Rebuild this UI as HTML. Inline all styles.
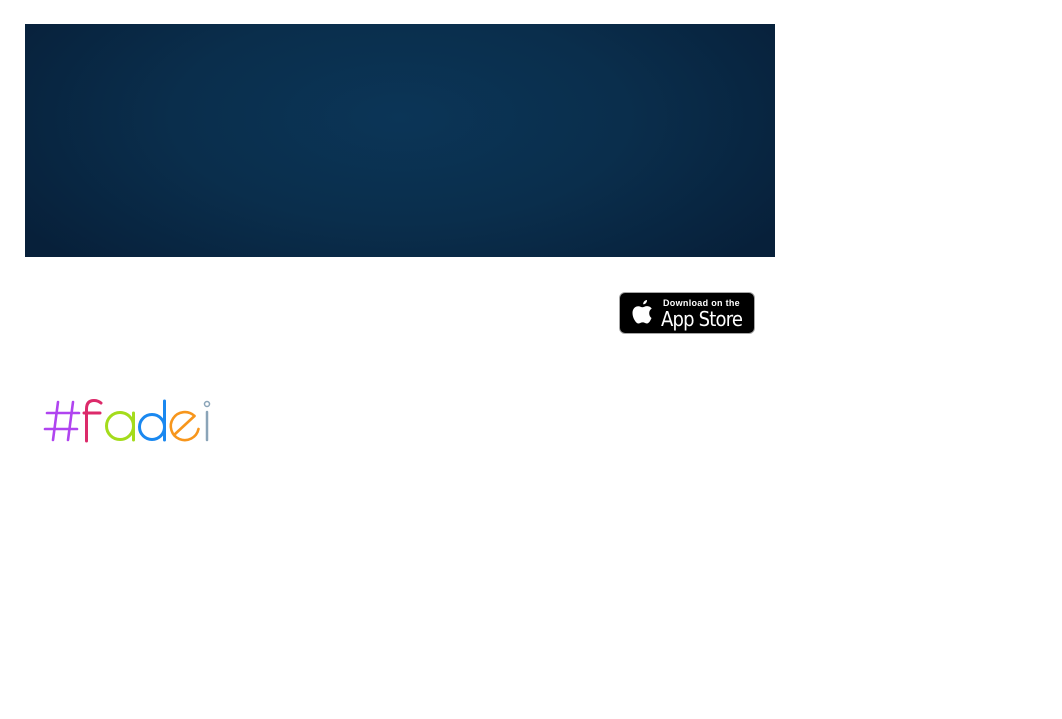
<!DOCTYPE html>
<html><head><style>
body{margin:0;width:1062px;height:719px;background:#fff;position:relative;overflow:hidden;font-family:"Liberation Sans",sans-serif}
.banner{position:absolute;left:25px;top:24px;width:750px;height:233px;background:radial-gradient(ellipse 60% 90% at 50% 40%,#0b3557 0%,#0a2e4c 50%,#07203a 100%)}
.badge{position:absolute;left:619px;top:292px;width:134px;height:40px;background:#000;border:1px solid #a6a6a6;border-radius:6px;color:#fff}
.badge .t1{position:absolute;left:43px;top:5px;font-size:9px;font-weight:bold;letter-spacing:.3px}
.badge .t2{position:absolute;left:41px;top:14px;font-size:20px;letter-spacing:-.8px;font-family:"DejaVu Sans Condensed","Liberation Sans",sans-serif}
</style></head><body>
<div class="banner"></div>
<div class="badge">
<svg style="position:absolute;left:11px;top:6px" width="24" height="27" viewBox="0 0 24 27"><path fill="#fff" d="M16 1c.2 2.2-1.6 4.4-3.8 4.3-.2-2.1 1.7-4.2 3.8-4.3zM20.5 19c-1 2.5-2.6 5.5-4.6 5.5-1.8 0-2.2-1.1-4.2-1.1s-2.5 1.1-4.2 1.1C5 24.5 1.5 19 1.5 14c0-4.5 3-6.8 5.7-6.8 1.8 0 3 1.1 4.2 1.1 1.1 0 2.7-1.2 4.6-1.2 1 0 3.3.3 4.7 2.5-3.6 2-3 7.6-.2 9.4z"/></svg>
<div class="t1">Download on the</div>
<div class="t2">App Store</div>
</div>
<svg style="position:absolute;left:0;top:0" width="260" height="460" fill="none" stroke-width="3" stroke-linecap="round">
<g stroke="#b044f0" stroke-width="2.6"><line x1="58" y1="402" x2="53" y2="440"/><line x1="73" y1="402" x2="68" y2="440"/><line x1="47" y1="413" x2="79" y2="413"/><line x1="45" y1="429" x2="77" y2="429"/></g>
<g stroke="#dc2a6a"><path d="M101 403Q98 400.5 94 400.5Q86.5 400.5 86.5 409V441"/><line x1="84" y1="413" x2="100" y2="413"/></g>
<g stroke="#a4dc1c"><circle cx="120" cy="426" r="13.5"/><line x1="133.5" y1="413" x2="133.5" y2="440"/></g>
<g stroke="#1a88f0"><circle cx="152" cy="427" r="12.5"/><line x1="164.5" y1="401" x2="164.5" y2="440"/></g>
<g stroke="#f7961c" stroke-width="2.6"><path d="M198.5 429A14 14 0 1 1 194.5 416"/><path d="M174 435L194.5 416"/></g>
<g stroke="#8aa4b8" stroke-width="2.5"><circle cx="207" cy="404" r="2.5" stroke-width="1.5"/><line x1="207" y1="412" x2="207" y2="440"/></g>
</svg>
</body></html>
